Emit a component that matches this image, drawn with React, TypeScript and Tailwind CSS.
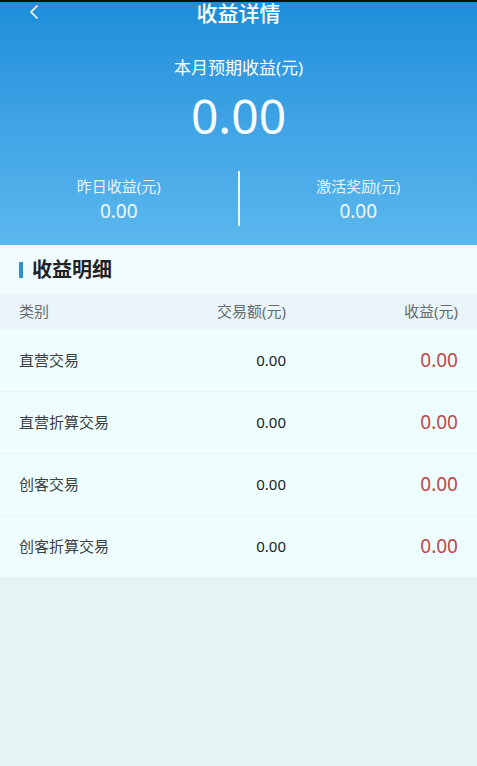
import { ChevronLeft } from 'lucide-react';

const rows = [
  { name: '直营交易', amount: '0.00', income: '0.00' },
  { name: '直营折算交易', amount: '0.00', income: '0.00' },
  { name: '创客交易', amount: '0.00', income: '0.00' },
  { name: '创客折算交易', amount: '0.00', income: '0.00' },
];

export default function App() {
  return (
    <div
      className="flex min-h-[766px] w-full flex-col bg-[#e4f4f4]"
      style={{ fontFamily: '"Noto Sans", "Noto Sans CJK SC", sans-serif' }}
    >
      {/* Header */}
      <div className="border-t-2 border-[#111] bg-gradient-to-b from-[#1b8edb] to-[#5bb8ee] text-white">
        <div className="relative flex h-[22px] items-center justify-center">
          <ChevronLeft className="absolute left-[22px] top-[-2px] h-[24px] w-[24px]" strokeWidth={1.75} />
          <span className="text-[21px] leading-[22px] font-medium">收益详情</span>
        </div>

        <div className="mt-[32px] text-center text-[17px] leading-[24px]">本月预期收益(元)</div>
        <div className="mt-[10px] text-center text-[48px] leading-[52px] font-normal text-[#f4fcff]">0.00</div>

        <div className="mt-[29px] flex h-[55px] items-stretch">
          <div className="flex flex-1 flex-col items-center justify-center">
            <span className="text-[15px] leading-[20px] text-[#e6f5ff]">昨日收益(元)</span>
            <span className="mt-[4px] text-[19px] leading-[22px] text-[#eef9ff]">0.00</span>
          </div>
          <div className="w-[2px] bg-[#e8f6ff]" />
          <div className="flex flex-1 flex-col items-center justify-center">
            <span className="text-[15px] leading-[20px] text-[#e6f5ff]">激活奖励(元)</span>
            <span className="mt-[4px] text-[19px] leading-[22px] text-[#eef9ff]">0.00</span>
          </div>
        </div>
        <div className="h-[19px]" />
      </div>

      {/* Section title */}
      <div className="flex h-[49px] items-center bg-[#effbfd] px-[19px]">
        <div className="h-[16px] w-[4px] bg-[#2f8fd0]" />
        <span className="ml-[9px] text-[20px] font-bold text-[#1f2326]">收益明细</span>
      </div>

      {/* Table header */}
      <div className="flex h-[35px] items-center bg-[#e9f5f9] px-[19px] text-[15px] text-[#666b6e]">
        <span className="flex-1">类别</span>
        <span className="w-[160px] text-right">交易额(元)</span>
        <span className="w-[172px] text-right">收益(元)</span>
      </div>

      {/* Rows */}
      <div className="bg-[#eefdfe]">
        {rows.map((r, i) => (
          <div
            key={r.name}
            className={`flex h-[62px] items-center px-[19px] ${i > 0 ? 'border-t border-[#e6f6f7]' : ''}`}
          >
            <span className="flex-1 text-[15px] text-[#3c4043]">{r.name}</span>
            <span className="w-[160px] text-right text-[15px] text-[#222]">{r.amount}</span>
            <span className="w-[172px] text-right text-[19px] text-[#c0474a]">{r.income}</span>
          </div>
        ))}
      </div>
    </div>
  );
}
